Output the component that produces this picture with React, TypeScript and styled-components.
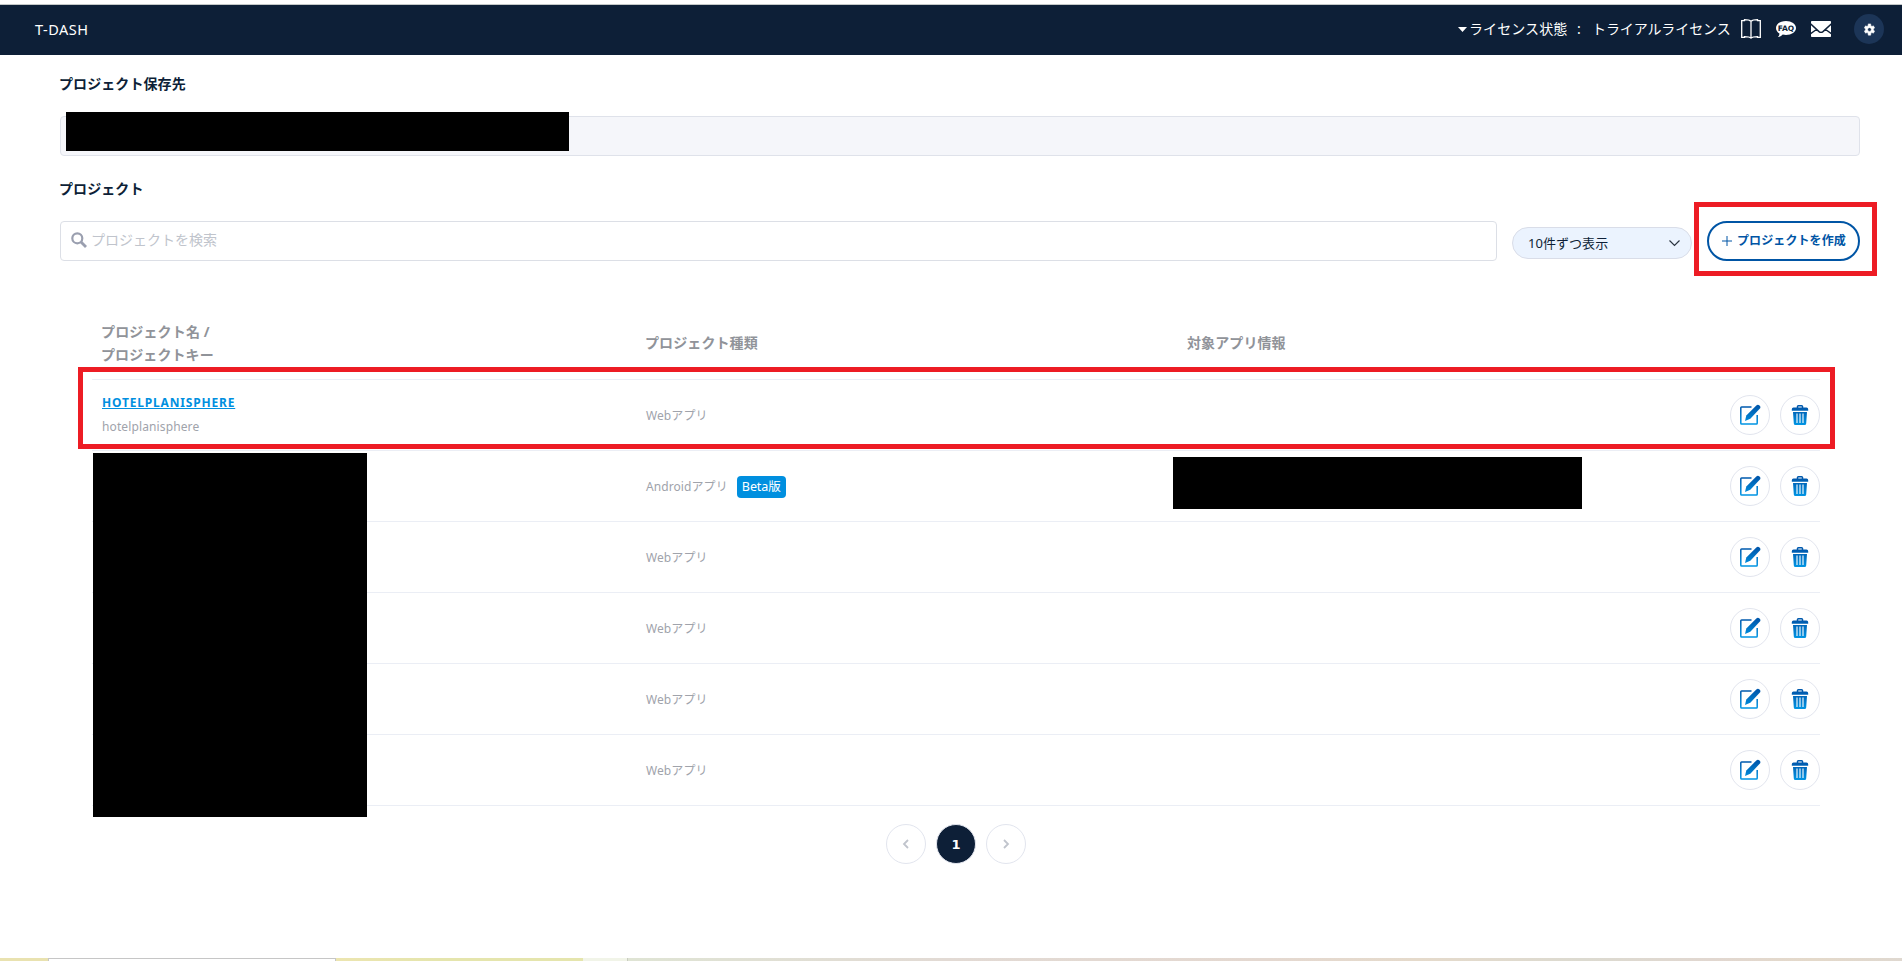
import React from 'react';
import styled, { createGlobalStyle } from 'styled-components';

const Global = createGlobalStyle`
  * { box-sizing: border-box; }
  body { margin: 0; background: #fff; overflow: hidden; font-family: "Noto Sans", "Noto Sans CJK JP", sans-serif; color: #0d1f37; }
  button { font: inherit; padding: 0; cursor: pointer; }
  svg { display: block; flex: none; }
`;

const Page = styled.div`
  height: 961px;
  display: flex;
  flex-direction: column;
  overflow: hidden;
`;
const WindowEdge = styled.div`
  height: 4px;
  flex: none;
  background: #fff;
`;
const TopBar = styled.header`
  height: 51px;
  flex: none;
  padding: 0 18px 2px 35px;
  border-top: 1px solid #c4c8c8;
  background: #0d1f37;
  color: #fff;
  display: flex;
  align-items: center;
`;
const Label = styled.span<{ $size?: number; $gap?: number; $w?: number }>`
  font-size: ${p => p.$size ?? 14}px;
  letter-spacing: ${p => p.$gap ?? 0}px;
  width: ${p => (p.$w ? p.$w + 'px' : 'auto')};
  line-height: 20px;
  white-space: nowrap;
  flex: none;
`;
const License = styled.div`
  margin-left: auto;
  display: flex;
  align-items: center;
`;
const Caret = styled.svg`
  margin-right: 2px;
`;
const HeaderIcons = styled.div`
  display: flex;
  align-items: center;
  gap: 15px;
  margin-left: 10px;
`;
const Gear = styled.button`
  width: 30px;
  height: 30px;
  margin-left: 8px;
  border: 0;
  border-radius: 50%;
  background: #1c3557;
  display: flex;
  align-items: center;
  justify-content: center;
`;
const Main = styled.main`
  flex: 1;
  padding: 18px 42px 0 60px;
`;
const Heading = styled.h2`
  margin: 0 0 0 -1px;
  font-size: 14px;
  font-weight: 700;
  letter-spacing: 0.08px;
  line-height: 22px;
`;
const PathField = styled.div`
  height: 40px;
  margin: 21px 0 22px;
  border: 1px solid #dfe2ea;
  border-radius: 4px;
  background: #f5f6fa;
  position: relative;
`;
const Redaction = styled.div<{ $x: number; $y: number; $w: number; $h: number }>`
  position: absolute;
  left: ${p => p.$x}px;
  top: ${p => p.$y}px;
  width: ${p => p.$w}px;
  height: ${p => p.$h}px;
  background: #000;
`;
const Tools = styled.div`
  display: flex;
  margin-top: 21px;
  height: 40px;
`;
const Search = styled.div`
  width: 1437px;
  height: 40px;
  padding: 0 10px 2px;
  border: 1px solid #dcdfe6;
  border-radius: 4px;
  color: #c0c4cc;
  display: flex;
  align-items: center;
  gap: 4px;
`;
const Select = styled.button`
  width: 180px;
  height: 32px;
  margin: 6px 15px 0;
  padding: 0 11px 0 15px;
  border: 1px solid #d9dde8;
  border-radius: 16px;
  background: #ebf3fe;
  color: #0d1f37;
  display: flex;
  align-items: center;
  justify-content: space-between;
`;
const Create = styled.button`
  width: 153px;
  height: 40px;
  padding: 0 0 1px 13px;
  border: 2px solid #0055a5;
  border-radius: 20px;
  background: #fff;
  color: #0055a5;
  font-weight: 700;
  display: flex;
  align-items: center;
  gap: 5px;
`;
const Frame = styled.div<{ $x: number; $y: number; $w: number; $h: number }>`
  position: absolute;
  left: ${p => p.$x}px;
  top: ${p => p.$y}px;
  width: ${p => p.$w}px;
  height: ${p => p.$h}px;
  border: 5px solid #ed1c24;
  pointer-events: none;
`;
const Table = styled.section`
  width: 1728px;
  margin: 47px 0 0 32px;
`;
const Row = styled.div`
  height: 71px;
  padding-left: 10px;
  border-bottom: 1px solid #ebeef5;
  display: grid;
  grid-template-columns: 544px 542px 1fr auto;
  align-items: center;
  font-size: 12px;
  color: #a0a3ab;
`;
const HeadRow = styled(Row)`
  height: 72px;
  padding: 0 0 1px 9px;
  font-weight: 700;
  color: #909399;
`;
const NameHead = styled.div`
  display: flex;
  flex-direction: column;
  gap: 3px;
`;
const Names = styled.div`
  display: flex;
  flex-direction: column;
  gap: 4px;
`;
const Link = styled.a`
  align-self: flex-start;
  font-size: 12px;
  letter-spacing: 0.82px;
  line-height: 20px;
  font-weight: 700;
  color: #008fdf;
  text-decoration: underline;
`;
const Kind = styled.div`
  display: flex;
  align-items: center;
  gap: 9px;
  padding-top: 2px;
`;
const Badge = styled.span`
  width: 49px;
  height: 22px;
  border-radius: 4px;
  background: #008fdf;
  color: #fff;
  font-size: 12.5px;
  line-height: 21px;
  text-align: center;
  letter-spacing: -0.1px;
`;
const Actions = styled.div`
  display: flex;
  gap: 10px;
`;
const Round = styled.button<{ $active?: boolean }>`
  width: 40px;
  height: 40px;
  border: 1px solid #e2e5ee;
  border-radius: 50%;
  background: ${p => (p.$active ? '#0d1f37' : '#fff')};
  color: ${p => (p.$active ? '#fff' : '#c0c4cc')};
  font: 700 13px "DejaVu Sans", sans-serif;
  display: flex;
  align-items: center;
  justify-content: center;
`;
const Pager = styled.nav`
  display: flex;
  gap: 10px;
  margin: 18px 0 0 826px;
`;
const Desktop = styled.footer`
  height: 3px;
  flex: none;
  display: flex;
`;
const Strip = styled.div<{ $w?: number; $bg: string }>`
  width: ${p => (p.$w ? p.$w + 'px' : 'auto')};
  flex: ${p => (p.$w ? 'none' : 1)};
  background: ${p => p.$bg};
`;
const Tab = styled(Strip)`
  border: 1px solid #c6c6c6;
  border-bottom: 0;
`;

const BookIcon = () => (
  <svg width="20" height="20" viewBox="0 0 20 20" fill="none" stroke="#fff" strokeWidth="1.3">
    <path d="M10 2.200C8.500.9 6.500.7 3.500.7v.9H.7v16.700H3.500v-.600c2.500 0 5 .1 6.500 1.400 1.500-1.300 4-1.400 6.500-1.400v.600h2.800V1.600H16.500V.7C13.500.7 11.500.9 10 2.200v16.900" />
  </svg>
);
const FaqIcon = () => (
  <svg width="20" height="18" viewBox="0 0 20 18">
    <path d="M10 1c5.500 0 10 2.900 10 7s-4.500 7-10 7c-1.200 0-2.300-.1-3.300-.4C5.300 16.300 4 16.900 2 17c1-1 1.500-2.200 1.400-3.500C1.300 12.200 0 10.300 0 8c0-4.100 4.500-7 10-7z" fill="#fff" />
    <text x="10" y="10.800" textAnchor="middle" fontSize="7.500" fontWeight="700" fontFamily="DejaVu Sans" textLength="16.500" lengthAdjust="spacingAndGlyphs" fill="#0d1f37">FAQ</text>
  </svg>
);
const MailIcon = () => (
  <svg width="20" height="16" viewBox="0 0 20 16">
    <rect width="20" height="16" rx="0.800" fill="#fff" />
    <path d="M-.5 2.800 8 10.600q2 1.600 4 0l8.500-7.800M-.5 12.800 5.800 8.300M20.500 12.800 14.200 8.300" fill="none" stroke="#0d1f37" strokeWidth="1.400" />
  </svg>
);
const GearIcon = () => (
  <svg width="15" height="15" viewBox="1 0 24 24" fill="#fff">
    <path d="M19.140 12.940a7.500 7.500 0 0 0 0-1.880l2.030-1.580-1.920-3.320-2.390.960a7 7 0 0 0-1.620-.940L14.880 3h-3.840l-.360 3.180a7 7 0 0 0-1.620.94l-2.390-.96-1.920 3.320 2.030 1.580a7.500 7.500 0 0 0 0 1.880l-2.030 1.580 1.920 3.320 2.390-.96a7 7 0 0 0 1.620.94l.36 3.180h3.840l.360-3.180a7 7 0 0 0 1.620-.94l2.390.96 1.920-3.320zM12.960 15a3 3 0 1 1 0-6 3 3 0 0 1 0 6z" stroke="#fff" strokeWidth="0.800" />
  </svg>
);
const SearchIcon = () => (
  <svg width="16" height="16" viewBox="0 0 16 16" fill="none" stroke="#9a9faf">
    <circle cx="6.300" cy="6.300" r="5" strokeWidth="2.200" />
    <path d="m10 10 5 5" strokeWidth="2.800" />
  </svg>
);
const Gradient = ({ id }: { id: string }) => (
  <defs>
    <linearGradient id={id} x1="0" y1="0" x2="0" y2="20" gradientUnits="userSpaceOnUse">
      <stop offset="0.150" stopColor="#0059ad" />
      <stop offset="1" stopColor="#0095e4" />
    </linearGradient>
  </defs>
);
const EditIcon = () => (
  <svg width="22" height="22" viewBox="0 0 22 22">
    <Gradient id="edit" />
    <path d="M12.500 3H2.600Q1.800 3 1.800 3.800v15.400q0 .8.800.8h14.800q.8 0 .8-.8V11" fill="none" stroke="url(#edit)" strokeWidth="1.500" />
    <path d="M17.300 1.500q1.500-1.300 3.200 0 1.600 1.500.4 3.100L11.300 14.700l-5.300 2.300 1.300-5.600z" fill="url(#edit)" />
  </svg>
);
const TrashIcon = () => (
  <svg width="18" height="20" viewBox="0 0 18 20">
    <Gradient id="trash" />
    <path d="M6.500 3V1.600Q6.500.8 7.300.8h3.400q.8 0 .8.800V3" fill="none" stroke="url(#trash)" strokeWidth="1.500" />
    <path d="M2.500 2.500h13Q17.200 2.500 17.200 4.300v1.500H.8V4.300Q.8 2.500 2.500 2.500zM2 7h14l-.8 11.500q-.1 1.500-1.600 1.500H4.400q-1.500 0-1.600-1.500z" fill="url(#trash)" />
    <path d="M6 8.500v9.500M9 8.500v9.500M12 8.500v9.500" stroke="#fff" strokeWidth="1.100" />
  </svg>
);
const Chevron = ({ d, w, h, color, sw }: { d: string; w: number; h: number; color: string; sw: number }) => (
  <svg width={w} height={h} viewBox={`0 0 ${w} ${h}`} fill="none" stroke={color} strokeWidth={sw}>
    <path d={d} />
  </svg>
);

const rows = [
  { name: 'HOTELPLANISPHERE', key: 'hotelplanisphere', kind: 'Webアプリ' },
  { kind: 'Androidアプリ', beta: true },
  { kind: 'Webアプリ' },
  { kind: 'Webアプリ' },
  { kind: 'Webアプリ' },
  { kind: 'Webアプリ' },
];

export default function App() {
  return (
    <Page>
      <Global />
      <WindowEdge />
      <TopBar>
        <Label $size={14.5} $gap={0.5}>T-DASH</Label>
        <License>
          <Caret width="9" height="5" viewBox="0 0 9 5"><path d="M0 0h9L4.500 5z" fill="#fff" /></Caret>
          <Label $w={108} $gap={0.1}>ライセンス状態</Label>
          <Label $w={15}>:</Label>
          <Label $w={139} $gap={-0.1}>トライアルライセンス</Label>
          <HeaderIcons>
            <BookIcon />
            <FaqIcon />
            <MailIcon />
            <Gear><GearIcon /></Gear>
          </HeaderIcons>
        </License>
      </TopBar>
      <Main>
        <Heading>プロジェクト保存先</Heading>
        <PathField><Redaction $x={5} $y={-5} $w={503} $h={39} /></PathField>
        <Heading>プロジェクト</Heading>
        <Tools>
          <Search>
            <SearchIcon />
            <Label>プロジェクトを検索</Label>
          </Search>
          <Select>
            <Label $size={13} $gap={0.05}>10件ずつ表示</Label>
            <Chevron d="M.5.5 5.500 5.500l5-5" w={11} h={7} color="#2b3440" sw={1.2} />
          </Select>
          <Create>
            <Chevron d="M5 0v10M0 5h10" w={10} h={10} color="#0055a5" sw={1} />
            <Label $size={12} $gap={0.1}>プロジェクトを作成</Label>
          </Create>
        </Tools>
        <Table>
          <HeadRow>
            <NameHead>
              <Label $gap={0.15}>プロジェクト名 /</Label>
              <Label $gap={0.1}>プロジェクトキー</Label>
            </NameHead>
            <Label $gap={0.1}>プロジェクト種類</Label>
            <Label $gap={0.1}>対象アプリ情報</Label>
          </HeadRow>
          {rows.map((r, i) => (
            <Row key={i}>
              <Names>
                {r.name && <Link>{r.name}</Link>}
                {r.key && <Label $size={12} $gap={0.12}>{r.key}</Label>}
              </Names>
              <Kind>
                <Label $size={12} $gap={0.08}>{r.kind}</Label>
                {r.beta && <Badge>Beta版</Badge>}
              </Kind>
              <span />
              <Actions>
                <Round><EditIcon /></Round>
                <Round><TrashIcon /></Round>
              </Actions>
            </Row>
          ))}
        </Table>
        <Pager>
          <Round><Chevron d="M6 1 2 5l4 4" w={8} h={10} color="#c0c4cc" sw={1.8} /></Round>
          <Round $active>1</Round>
          <Round><Chevron d="M2 1l4 4-4 4" w={8} h={10} color="#c0c4cc" sw={1.8} /></Round>
        </Pager>
      </Main>
      <Desktop>
        <Strip $w={48} $bg="#e9e2b0" />
        <Tab $w={288} $bg="#fff" />
        <Strip $w={247} $bg="linear-gradient(90deg, #ece5b0, #e5e5ad 40%)" />
        <Strip $w={44} $bg="#f1f4e8" />
        <Strip $w={1} $bg="#c8ccc0" />
        <Strip $bg="linear-gradient(90deg, #dfe4d4, #e2dad4 25%, #e4d8d0 50%, #e5dacb 62%, #dcdad0 75%, #e1d7d0 85%, #e4d9ca 93%, #dfd8d0)" />
      </Desktop>
      <Redaction $x={93} $y={453} $w={274} $h={364} />
      <Redaction $x={1173} $y={457} $w={409} $h={52} />
      <Frame $x={1694} $y={202} $w={183} $h={74} />
      <Frame $x={78} $y={367} $w={1757} $h={82} />
    </Page>
  );
}
